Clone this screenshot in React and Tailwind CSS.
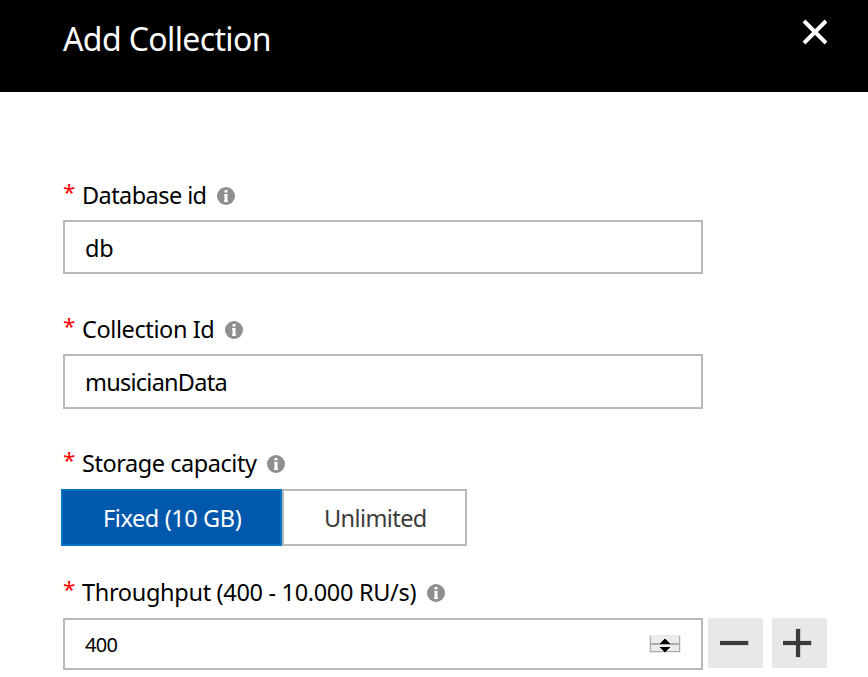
const fontStack = "font-['Noto_Sans','Open_Sans',sans-serif]";

function InfoIcon() {
  return (
    <svg className="block shrink-0" width="18" height="18" viewBox="0 0 18 18">
      <circle cx="9" cy="9" r="9" fill="#8f8f8f" />
      <path d="M7.5 3h3v2.5h-3zM7 7h3.5v6.5h.5V15H7v-1.5h.5V8.3H7z" fill="#fff" />
    </svg>
  );
}

function Label({ text, width, tracking }) {
  return (
    <div className="flex h-8 items-center">
      <span className="-mt-[7px] w-[19px] shrink-0 text-[22.5px] leading-8 text-[#ff0000]">*</span>
      <span className={`shrink-0 whitespace-nowrap text-[23.5px] leading-8 ${width} ${tracking}`}>{text}</span>
      <span className="pt-px"><InfoIcon /></span>
    </div>
  );
}

export default function App() {
  return (
    <div className={`h-[677px] w-[868px] overflow-hidden bg-white text-black ${fontStack}`}>
      <header className="flex h-[92px] justify-between bg-black pl-[63px] pr-[40px] text-white">
        <h1 className="pt-[17px] text-[32px] font-normal leading-[44px] tracking-[-0.62px]">Add Collection</h1>
        <svg className="mt-[19px]" width="26" height="26" viewBox="0 0 26 26">
          <path d="M2 2L24 24M24 2L2 24" stroke="#fff" strokeWidth="3.9" />
        </svg>
      </header>
      <main className="pl-[63px] pt-[87px]">
        <Label text="Database id" width="w-[135px]" tracking="tracking-[-0.57px]" />
        <div className="mt-[9px] flex h-[54px] w-[640px] items-center border-2 border-[#b9b9b9] pl-5 pt-[3px] text-[23.5px]">
          <span className="tracking-[-0.3px]">db</span>
        </div>
        <div className="mt-[39px]">
          <Label text="Collection Id" width="w-[143px]" tracking="tracking-[-0.4px]" />
        </div>
        <div className="mt-[9px] flex h-[55px] w-[640px] items-center border-2 border-[#b9b9b9] pl-5 pt-[2px] text-[23.5px]">
          <span className="tracking-[-0.75px]">musicianData</span>
        </div>
        <div className="mt-[38px]">
          <Label text="Storage capacity" width="w-[185px]" tracking="tracking-[-0.45px]" />
        </div>
        <div className="-ml-[2px] mt-[10px] flex h-[57px] text-[23.5px]">
          <div className="flex w-[221px] items-center border-2 border-[#0072c6] bg-[#0058ad] pl-10 pt-[2px] text-white">
            <span className="whitespace-nowrap tracking-[-0.4px]">Fixed (10 GB)</span>
          </div>
          <div className="flex w-[185px] items-center border-2 border-[#b9b9b9] pl-10 pt-[2px] text-[#3c3c3c]">
            <span className="tracking-[-0.6px]">Unlimited</span>
          </div>
        </div>
        <div className="mt-[30px]">
          <Label text="Throughput (400 - 10.000 RU/s)" width="w-[345px]" tracking="tracking-[-0.32px]" />
        </div>
        <div className="mt-[10px] flex items-start">
          <div className="flex h-[52px] w-[640px] items-center justify-between border-2 border-[#b9b9b9] pl-5 pr-5 text-[20px]">
            <span className="pt-[2px] tracking-[-0.7px]">400</span>
            <svg width="32" height="18" viewBox="0 0 32 18" shapeRendering="crispEdges">
              <rect width="32" height="18" fill="#ebebeb" />
              <path d="M1.5 1v16M30.5 1v16M1 16.5h30" stroke="#ababab" fill="none" />
              <rect x="2" y="8" width="28" height="2" fill="#ababab" />
              <path d="M11 9h10l-5-6zM11 12h10l-5 6z" fill="#000" />
            </svg>
          </div>
          <div className="ml-[5px] flex h-[50px] w-[55px] bg-[#e8e8e8]">
            <svg width="55" height="50" viewBox="0 0 55 50">
              <path d="M12 22.5h29v5H12z" fill="#c4c4c4" />
              <path d="M12 23h28v4H12z" fill="#3a3a3a" />
            </svg>
          </div>
          <div className="ml-[9px] flex h-[50px] w-[55px] bg-[#e8e8e8]">
            <svg width="55" height="50" viewBox="0 0 55 50">
              <path d="M11 22.5h29v5H11zM23.5 10.5h5.5v29h-5.5z" fill="#c4c4c4" />
              <path d="M11 23h28v4H11zM24 11h4v28h-4z" fill="#3a3a3a" />
            </svg>
          </div>
        </div>
      </main>
    </div>
  );
}
